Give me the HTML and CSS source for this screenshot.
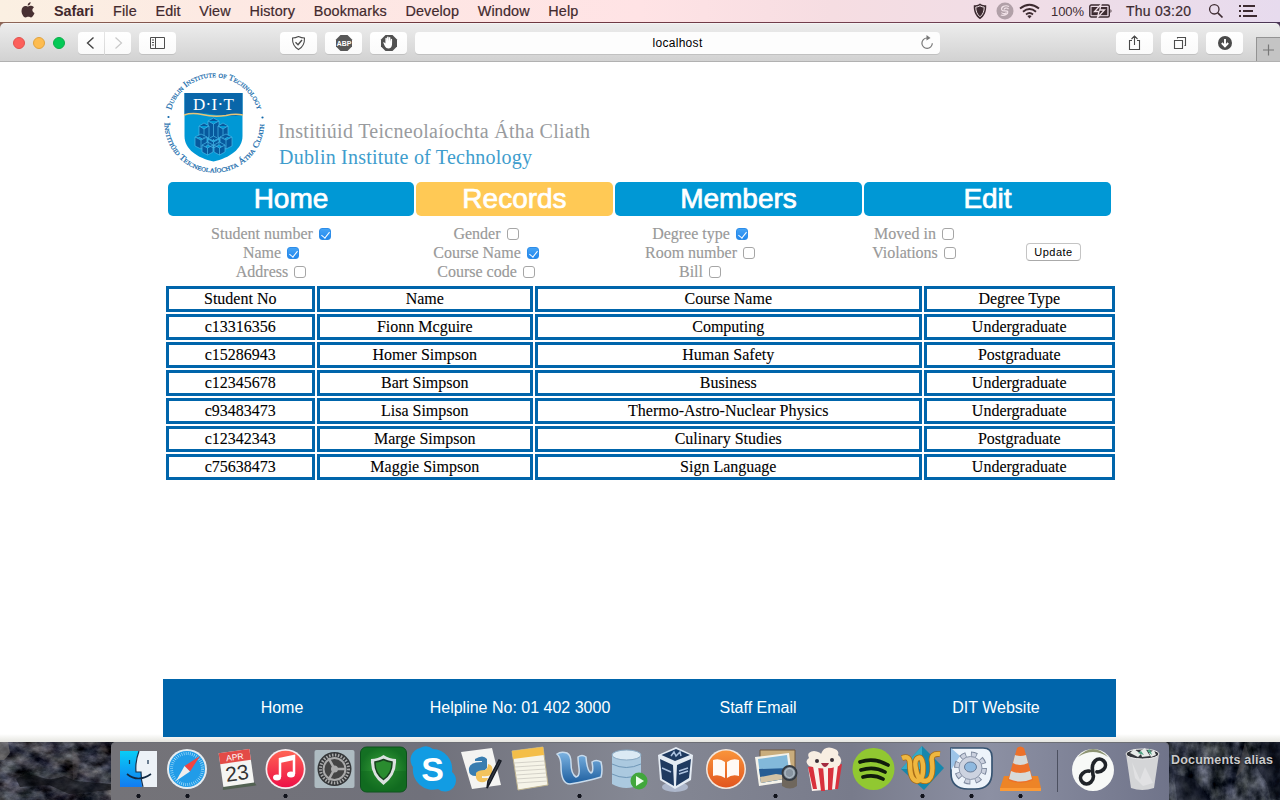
FILE: index.html
```html
<!DOCTYPE html>
<html lang="en">
<head>
<meta charset="utf-8">
<title>localhost</title>
<link rel="stylesheet" href="styles.css">
</head>
<body>
<div class="desktop">
  <div class="menubar">
    <svg class="apple" width="14" height="16" viewBox="0 0 14 16"><path d="M9.6 0C9.8 1.9 8.2 3.7 6.7 3.6 6.5 1.900 8 .3 9.600 0zM7.100 4.500C7.800 4.500 8.800 3.700 10.200 3.800c1.200.1 2.200.6 2.800 1.500-2.400 1.500-2 4.700.5 5.700-.6 1.800-2 4.400-3.500 4.400-1 0-1.500-.6-2.700-.6s-1.700.6-2.700.6C2.600 15.400.5 11.800.5 8.900c0-3.200 2-5 4-5 1.100 0 2 .6 2.600.6z" fill="#483032"/></svg>
    <nav class="menus"><b>Safari</b><span>File</span><span>Edit</span><span>View</span><span>History</span><span>Bookmarks</span><span>Develop</span><span>Window</span><span>Help</span></nav>
    <div class="status">
      <svg width="14" height="17" viewBox="0 0 14 17"><path d="M7 .5c2 1.500 4 1.700 6.200 1.700.4 6-1.700 11-6.200 14C2.500 13.200.4 8.200.8 2.200 3 2.200 5 2 7 .5z" fill="#3d2b31"/><path d="M7 2.800c1.500.9 2.800 1.200 4.200 1.300.1 4-1.200 7.300-4.200 9.700C4 11.400 2.700 8.100 2.800 4.100 4.200 4 5.500 3.700 7 2.800z" fill="none" stroke="#eadce0" stroke-width="1"/></svg>
      <svg class="swirl" width="18" height="18" viewBox="0 0 18 18"><circle cx="9" cy="9" r="8.500" fill="#b1a0a8"/><path d="M13 4.500C9 2.500 4.500 5 5.800 8c1.200 2 5.300-.2 6 1.800.5 2-3.500 4.500-7 3.200M12.500 7.200C11 5 7.700 6.300 8.300 7.700M5.500 10.500c1.500 2 5 1.200 4.500-.3" fill="none" stroke="#f1e2e8" stroke-width="1.200"/></svg>
      <svg class="wifi" width="21" height="16" viewBox="0 0 21 16"><g fill="none" stroke="#3d2b31" stroke-width="1.900"><path d="M1 5.500Q10.500-2 20 5.500M4 8.700Q10.500 3.300 17 8.700M7 11.500Q10.500 8.700 14 11.500"/></g><path d="M8.300 12.900q2.200-1.500 4.400 0l-2.200 2.700z" fill="#3d2b31"/></svg>
      <span class="percent">100%</span>
      <svg class="battery" width="24" height="14" viewBox="0 0 24 14"><rect x=".8" y="1" width="19.500" height="12" rx="1.500" fill="none" stroke="#3d2b31" stroke-width="1.400"/><path d="M2.500 3h15.800v8.200H2.500z" fill="#3d2b31"/><path d="M12 .5L5.500 7.500H10L8.500 13.500 15.500 6h-4.700z" fill="#3d2b31" stroke="#f0dfe7" stroke-width="1.300"/><path d="M21.500 5v4q2-2 0-4z" fill="#3d2b31"/></svg>
      <span class="clock">Thu 03:20</span>
      <svg class="search" width="16" height="16" viewBox="0 0 16 16"><circle cx="6.300" cy="6.300" r="4.700" fill="none" stroke="#3d2b31" stroke-width="1.300"/><path d="M9.800 9.800l4.700 4.700" stroke="#3d2b31" stroke-width="1.700"/></svg>
      <svg class="list" width="19" height="12" viewBox="0 0 19 12"><path d="M0 1h2M4 1h12M0 6h2M4 6h10M0 11h2M4 11h14" stroke="#3d2b31" stroke-width="2"/></svg>
    </div>
  </div>

  <div class="window">
    <div class="toolbar">
      <div class="lights"><i class="red"></i><i class="amber"></i><i class="green"></i></div>
      <div class="button half"><svg width="26" height="22"><path d="M15.500 5.500L9.500 11l6 5.500" fill="none" stroke="#454545" stroke-width="1.400"/></svg></div>
      <div class="button half forward"><svg width="26" height="22"><path d="M10.500 5.500l6 5.500-6 5.500" fill="none" stroke="#c9c9c9" stroke-width="1.200"/></svg></div>
      <div class="button sidebar"><svg width="37" height="22"><path d="M11.500 5.500h14v11h-14zM16.500 5.500v11M13 8h2M13 10.500h2M13 13h2" fill="none" stroke="#4d4d4d"/></svg></div>
      <div class="button shield"><svg width="37" height="22"><path d="M18.500 4.500q3 1.500 6 1.500 .3 8-6 11.500-6.300-3.500-6-11.500 3 0 6-1.500z" fill="none" stroke="#4d4d4d" stroke-width="1.100"/><path d="M15.500 10.300l2.500 2.400 4-4.700" fill="none" stroke="#4d4d4d" stroke-width="1.400"/></svg></div>
      <div class="button"><svg width="37" height="22"><path d="M15.500 3h7l4.500 4.500v7L22.500 19h-7L11 14.500v-7z" fill="#575757"/><text x="19" y="13.600" text-anchor="middle" textLength="14.500" lengthAdjust="spacingAndGlyphs" font-size="7.500" font-weight="bold" fill="#fff">ABP</text></svg></div>
      <div class="button"><svg width="37" height="22"><path d="M15.500 3h7l4.500 4.500v7L22.500 19h-7L11 14.500v-7z" fill="#515151"/><path d="M13.200 10.500c1-.8 1.500.3 2.200 1V6.500c0-1 1.400-1 1.500 0V9.500l.2-4.300c0-1.100 1.500-1.100 1.600 0v4.100l.3-3.500c.1-1 1.400-.9 1.400 0v3.900l.4-2.400c.2-.9 1.300-.7 1.300.2 0 5.500.2 9-3.600 9-3.300 0-4-3.500-5.300-6z" fill="#fff"/></svg></div>
      <div class="address"><span>localhost</span><svg class="reload" width="14" height="15" viewBox="0 0 14 15"><path d="M7 3a5.200 5.200 0 1 0 5.300 5.200" fill="none" stroke="#777" stroke-width="1.200"/><path d="M6.500 0v5.500L10.500 3z" fill="#777"/></svg></div>
      <div class="button share"><svg width="37" height="22"><path d="M16 8.500h-2.500v9h10v-9H21M18.500 13V4M15.500 7l3-3 3 3" fill="none" stroke="#484848" stroke-width="1.100"/></svg></div>
      <div class="button"><svg width="37" height="22"><path d="M13.500 8.500h8v8h-8zM16.500 6.500v-1h8v8h-1" fill="none" stroke="#4d4d4d" stroke-width="1.100"/></svg></div>
      <div class="button"><svg width="37" height="22"><circle cx="19" cy="11" r="7" fill="#4b4b4b"/><path d="M19 7v7M15.800 11l3.200 3.300 3.200-3.300" fill="none" stroke="#fff" stroke-width="1.900"/></svg></div>
      <div class="newtab"><svg width="23" height="23"><path d="M6 12h11M11.500 6.500v11" stroke="#777" stroke-width="1.200"/></svg></div>
    </div>

    <main class="page">
      <header class="brand">
        <svg width="440" height="120" viewBox="163 62 440 120">
          <defs>
            <path id="ring-top" d="M171 110.200A45 45 0 0 1 257.600 110.200"/>
            <path id="ring-bottom" d="M164.550 120.500A49.800 49.800 0 1 0 264.050 120.500"/>
          </defs>
          <g class="ring-text" fill="#1268aa" stroke="#1268aa" stroke-width=".2">
            <text><textPath href="#ring-top" startOffset="0" textLength="116" lengthAdjust="spacingAndGlyphs">Dublin Institute of Technology</textPath></text>
            <text><textPath href="#ring-bottom" startOffset="2" textLength="155" lengthAdjust="spacingAndGlyphs">Institiúid Teicneolaíochta Átha Cliath</textPath></text>
          </g>
          <circle cx="168.500" cy="117" r="1.100" fill="#1268aa"/><circle cx="262.500" cy="117.500" r="1.100" fill="#1268aa"/>
          <path d="M184.500 93h58v43c0 13-13 22-29 25.500C197 158 184.500 149 184.500 136z" fill="#0098d5"/>
          <path d="M184.500 93h58v22q-15 2-29-.5t-29 0z" fill="#0966a9"/>
          <path d="M184 115q8-2.500 18-.5 12 3 24 1 9-2 17-.5" fill="none" stroke="#e6c477" stroke-width="1.500"/>
          <text x="213.500" y="110" text-anchor="middle" font-size="17" textLength="41" fill="#fff">D·I·T</text>
          <g fill="#07599d" stroke="#48b9e9" stroke-width=".7">
            <path d="M208 121l5.500-3 5.500 3v17l-5.500 3-5.500-3zM208 121l5.500 3 5.500-3M213.500 124v17"/>
            <path d="M199 126l5-3 5 3v11l-5 3-5-3zM199 126l5 3 5-3M204 129v11M218 126l5-3 5 3v11l-5 3-5-3zM218 126l5 3 5-3M223 129v11"/>
            <path d="M195 137l6-3 6 3v9l-6 3-6-3zM195 137l6 3 6-3M201 140v9M220 137l6-3 6 3v9l-6 3-6-3zM220 137l6 3 6-3M226 140v9"/>
            <path d="M202 145l5.500-3 5.500 3v7l-5.500 3-5.500-3zM202 145l5.500 3 5.500-3M207.500 148v7M214 145l5.500-3 5.500 3v7l-5.500 3-5.500-3zM214 145l5.500 3 5.500-3M219.500 148v7M208 139l5.500-3 5.500 3v6l-5.500 3-5.500-3zM208 139l5.500 3 5.500-3M213.500 142v6"/>
          </g>
          <text x="278" y="138" font-size="20" textLength="312" fill="#999b9e">Institiúid Teicneolaíochta Átha Cliath</text>
          <text x="279" y="164" font-size="20" textLength="253" fill="#3e9dcd">Dublin Institute of Technology</text>
        </svg>
      </header>
      <nav class="tabs"><a>Home</a><a class="current">Records</a><a>Members</a><a>Edit</a></nav>
      <form class="filters">
        <div><label>Student number<i class="box on"></i></label><label>Name<i class="box on"></i></label><label>Address<i class="box"></i></label></div>
        <div><label>Gender<i class="box"></i></label><label>Course Name<i class="box on"></i></label><label>Course code<i class="box"></i></label></div>
        <div><label>Degree type<i class="box on"></i></label><label>Room number<i class="box"></i></label><label>Bill<i class="box"></i></label></div>
        <div class="raised"><label>Moved in<i class="box"></i></label><label>Violations<i class="box"></i></label></div>
        <button type="button">Update</button>
      </form>
      <section class="records">
        <span>Student No</span><span>Name</span><span>Course Name</span><span>Degree Type</span>
        <span>c13316356</span><span>Fionn Mcguire</span><span>Computing</span><span>Undergraduate</span>
        <span>c15286943</span><span>Homer Simpson</span><span>Human Safety</span><span>Postgraduate</span>
        <span>c12345678</span><span>Bart Simpson</span><span>Business</span><span>Undergraduate</span>
        <span>c93483473</span><span>Lisa Simpson</span><span>Thermo-Astro-Nuclear Physics</span><span>Undergraduate</span>
        <span>c12342343</span><span>Marge Simpson</span><span>Culinary Studies</span><span>Postgraduate</span>
        <span>c75638473</span><span>Maggie Simpson</span><span>Sign Language</span><span>Undergraduate</span>
      </section>
      <footer class="footer"><a>Home</a><a>Helpline No: 01 402 3000</a><a>Staff Email</a><a>DIT Website</a></footer>
    </main>
  </div>

  <div class="bottom">
    <svg class="rock" viewBox="0 0 111 58">
      <filter id="stone" x="0" y="0" width="100%" height="100%" color-interpolation-filters="sRGB"><feTurbulence type="fractalNoise" baseFrequency=".05 .08" numOctaves="5" seed="7"/><feColorMatrix values=".85 .1 0 0 -.27  .85 .03 0 0 -.23  .85 0 .1 0 -.23  0 0 0 0 1"/></filter>
      <rect width="111" height="58" filter="url(#stone)"/><path d="M0 0h8l2 11-6 7H0z" fill="#8b8782" opacity=".5"/><path d="M16 37q12-7 24-2t24-1l12 5 35 3v6l-42 4-20-9-29 2z" fill="#090a0d" opacity=".6"/><path d="M72 6l8 12-3 17-4 3z" fill="#6a6567" opacity=".25"/>
    </svg>
    <div class="dock">
      <svg class="icon running" viewBox="0 0 49 58"><defs><linearGradient id="sky" x2="0" y2="1"><stop stop-color="#09cdf5"/><stop offset="1" stop-color="#117bf1"/></linearGradient></defs><path d="M6 9h37v36H6z" fill="#edf2f7"/><path d="M6 9h19q-4 10-3 21h5l1 15H6z" fill="url(#sky)"/><path d="M25 9q-4 11-3 21h5q0 8 2 15M15.500 18v4M34 18v4" fill="none" stroke="#17314d" stroke-width="1.200"/><path d="M13 32q11 9 24 0" fill="none" stroke="#132941" stroke-width="1.700"/></svg>
      <svg class="icon running" viewBox="0 0 49 58"><circle cx="24" cy="27" r="20" fill="#e7edf1"/><circle cx="24" cy="27" r="18" fill="#219ce8"/><circle cx="24" cy="27" r="15.500" fill="none" stroke="#b8e6fb" stroke-width="3" stroke-dasharray=".6 1.500"/><path d="M37 14L27 29.500 21.500 24z" fill="#f14442"/><path d="M13 39l8.500-15 5.500 5.500z" fill="#eee"/></svg>
      <svg class="icon" viewBox="0 0 49 58"><g transform="rotate(-8 24 27)"><path d="M9 42h31l2 4H8z" fill="#526152"/><path d="M9 9h31v34H9z" fill="#f5f5f3"/><path d="M9 9h31v11H9z" fill="#e34b46"/><text x="24.500" y="18" text-anchor="middle" font-size="8.500" fill="#fff">APR</text><text x="24.500" y="38.500" text-anchor="middle" font-size="21" fill="#333">23</text></g></svg>
      <svg class="icon running" viewBox="0 0 49 58"><defs><linearGradient id="tune" x2="0" y2="1"><stop stop-color="#ff6454"/><stop offset="1" stop-color="#ed1047"/></linearGradient></defs><circle cx="24.500" cy="27" r="20" fill="#f5edf0"/><circle cx="24.500" cy="27" r="18.300" fill="url(#tune)"/><path d="M19 35V17l14-3v18" fill="none" stroke="#fff" stroke-width="2.500"/><path d="M19 17l14-3v4l-14 3z" fill="#fff"/><ellipse cx="16" cy="35.500" rx="4" ry="3" fill="#fff"/><ellipse cx="30" cy="32.500" rx="4" ry="3" fill="#fff"/></svg>
      <svg class="icon" viewBox="0 0 49 58"><rect x="4.500" y="8" width="40" height="38" rx="2" fill="#aebbc1"/><circle cx="24.500" cy="27" r="17" fill="#343638"/><circle cx="24.500" cy="27" r="14" fill="none" stroke="#aaa" stroke-width="3" stroke-dasharray="1.500 1.500"/><circle cx="24.500" cy="27" r="11" fill="#444" stroke="#aaa" stroke-width="2"/><path d="M24.500 27H36M24.500 27l-6-11M24.500 27l-6 11" stroke="#aaa" stroke-width="2.500"/><circle cx="24.500" cy="27" r="3.500" fill="#aaa"/></svg>
      <svg class="icon" viewBox="0 0 49 58"><defs><radialGradient id="leaf"><stop stop-color="#3da63c"/><stop offset="1" stop-color="#147023"/></radialGradient></defs><rect x="1.500" y="5" width="46" height="45" rx="6" fill="url(#leaf)" stroke="#0c511c"/><path d="M2 29h45v15q0 5-6 5H8q-6 0-6-5z" fill="#0d641b" opacity=".4"/><path d="M24.500 13q6 4 12.500 4 1 16-12.500 26Q11 33 12 17q7 0 12.500-4z" fill="#dce1e0"/><path d="M24.500 17.500q4 2 8.500 2.500 .5 11-8.500 17.500Q15.500 31 16 20q4.500-.5 8.500-2.500z" fill="#2a8c2f" stroke="#16401c" stroke-width="1.500"/></svg>
      <svg class="icon" viewBox="0 0 49 58"><path d="M12 6a12 12 0 0 1 13 1 20 20 0 0 1 19 23 11 11 0 0 1-14 17A20 20 0 0 1 5 25 12 12 0 0 1 12 6z" fill="#129ce3"/><text x="24.500" y="38.500" font-size="34" font-weight="bold" text-anchor="middle" fill="#fff">S</text></svg>
      <svg class="icon" viewBox="0 0 49 58"><path d="M4 10l31-4 9 37-29 4z" fill="#f4f4f2"/><path d="M18 17q8-5 12 0v9q-3 4-10 4l-1 4q-8 0-7-8 1-6 13-6v-1h-7z" fill="#397db0"/><path d="M31 22q6 1 4 9-2 4-10 3v2h6q-1 5-8 4-5-1-4-9 2-3 9-3 3-1 3-6z" fill="#f2c35d"/><path d="M44 19L33 41l-3 5 1-7 11-21z" fill="#343b46" stroke="#171b24" stroke-width="1.500"/></svg>
      <svg class="icon" viewBox="0 0 49 58"><path d="M6 9l31-4 5 38-30 5z" fill="#f6f4e8" stroke="#beb390"/><path d="M6 9l31-4 1 8-31 4z" fill="#f4be48"/><path d="M8 21l31-2M9 25l30-2M9 29l31-2M10 33l30-2M10 37l31-2M11 41l30-2" stroke="#cbc9c0" stroke-width=".8"/></svg>
      <svg class="icon running" viewBox="0 0 49 58"><defs><linearGradient id="ink" x2="0" y2="1"><stop stop-color="#7db4e2"/><stop offset="1" stop-color="#1c5d9e"/></linearGradient></defs><path d="M2 12q4-3 10-1 4 2 4 10 0 11 5 14 4-1 3-9-1-8-1-11 4-3 8 0 1 14 5 16 3-1 1-11 4-3 9 0 2 8 0 15-13 4-31 7Q6 42 6 24 6 16 2 12z" fill="url(#ink)" stroke="#c8dbec" stroke-width="1.500"/></svg>
      <svg class="icon" viewBox="0 0 49 58"><path d="M8 12v30q14 8 29 0V12z" fill="#abc9df"/><ellipse cx="22.500" cy="13" rx="14.500" ry="5" fill="#dbeaf4" stroke="#88a8c2"/><path d="M8 22q14 7 29 0M8 32q14 7 29 0" fill="none" stroke="#6f97b7"/><circle cx="35" cy="39" r="8.500" fill="#41a73c"/><path d="M32 34v10l8-5z" fill="#eaffea"/></svg>
      <svg class="icon" viewBox="0 0 49 58"><ellipse cx="22" cy="45" rx="13" ry="5" fill="#adb7cb"/><path d="M5 13L23 5l17 8-2 25-16 9-15-9z" fill="#e4ebf3"/><path d="M8.500 13L23 7l14 6-15 6zM7 17l13 6 1 21-12-7zM38 17l-14 6-1 21 13-8z" fill="#1f3a60"/><path d="M18 14l3-4 2 4 4-4 1 4M9 26l9 4M26 29l9-3M26 32l9-3" fill="none" stroke="#adc2df" stroke-width="1.500"/></svg>
      <svg class="icon" viewBox="0 0 49 58"><defs><linearGradient id="cover" x2="0" y2="1"><stop stop-color="#f9943a"/><stop offset="1" stop-color="#e2561f"/></linearGradient></defs><circle cx="24" cy="27" r="20" fill="#f3e8df"/><circle cx="24" cy="27" r="18.500" fill="url(#cover)"/><path d="M11 18q7-2 12 2v16q-6-4-12-2zM25 20q5-4 12-2v16q-7-2-12 2z" fill="#fffaf5"/></svg>
      <svg class="icon running" viewBox="0 0 49 58"><path d="M9 8h35v27H9z" fill="#c9ad7d" stroke="#6f563c"/><path d="M4 15l34-4 4 28-34 5z" fill="#f4f2ea"/><path d="M7 17l29-4 3 23-29 5z" fill="#83b9da"/><path d="M8 27l30-1 1 10-29 5z" fill="#275d94"/><path d="M9 35l16-3 14 2v2l-29 5z" fill="#d2c2a5"/><path d="M31 33h15v11q-7 5-15 0z" fill="#6f675d"/><circle cx="38.500" cy="31" r="7" fill="#8794a0" stroke="#343b43" stroke-width="2"/><circle cx="38.500" cy="31" r="4.500" fill="none" stroke="#b9c6cf"/></svg>
      <svg class="icon" viewBox="0 0 49 58"><path d="M8 25l33-2-4 24-25 2z" fill="#faf1ec"/><path d="M8 25l5 22h4l-4-23zM18 24l3 25h4l-2-25zM28 24v24h4l2-25zM38 23l-3 24h3l4-25z" fill="#d8313d"/><path d="M9 24q-5-5 0-8-3-6 5-7 6 1 7 3 3-8 11-6 8 2 6 7 6 4 1 11-15 5-30 0z" fill="#f8eee2"/><circle cx="17" cy="19" r="2" fill="#392d34"/><circle cx="32" cy="18" r="2" fill="#392d34"/><path d="M21 21h8q-4 8-8 0z" fill="#a32b40"/></svg>
      <svg class="icon" viewBox="0 0 49 58"><circle cx="24.500" cy="27" r="21" fill="#91c831"/><path d="M11 20q14-5 28 3M12 28q13-4 24 2M14 35q11-3 20 2" fill="none" stroke="#101b0b" stroke-width="3.700" stroke-linecap="round"/></svg>
      <svg class="icon running" viewBox="0 0 49 58"><path d="M24 4l22 22-20 22L3 27z" fill="#1687ac"/><path d="M24 4v23H3z" fill="#35a9c6"/><path d="M4 16q8-3 8 6 0 16 7 17 7-1 6-16-1-9-5-7-4 2-2 11 2 13 10 12 8-2 6-19-2-9 8-8" fill="none" stroke="#a86d18" stroke-width="6"/><path d="M4 16q8-3 8 6 0 16 7 17 7-1 6-16-1-9-5-7-4 2-2 11 2 13 10 12 8-2 6-19-2-9 8-8" fill="none" stroke="#efb73f" stroke-width="4.400"/></svg>
      <svg class="icon running" viewBox="0 0 49 58"><path d="M4 6h32q9 0 9 9v15q0 17-17 17h-7Q4 47 4 31z" fill="#edf3fa" stroke="#375472" stroke-width="1.700"/><path d="M4 6l9 8-9 14z" fill="#9cc4e8"/><circle cx="23.500" cy="26" r="14" fill="none" stroke="#7b879c" stroke-width="5" stroke-dasharray="6 5"/><circle cx="23.500" cy="26" r="13.500" fill="none" stroke="#cbd1df" stroke-width="4" stroke-dasharray="4.300 6.300" stroke-dashoffset="-.8"/><circle cx="23.500" cy="26" r="11.500" fill="#cdd3e0" stroke="#8c96aa" stroke-width="1"/><ellipse cx="23.500" cy="25" rx="6" ry="5" fill="#8fb9df" stroke="#667b98"/></svg>
      <svg class="icon running" viewBox="0 0 49 58"><path d="M8 34h34l3 12H4z" fill="#ed8427"/><path d="M4 46h41v3H4z" fill="#fb9a37"/><path d="M21 6q3-3 7 0l9 32q-12 6-25 0z" fill="#ed7129"/><path d="M19 13q5 2 11 0l2 8q-8 4-15 0zM15 29q9 4 19 0l2 8q-12 5-23 0z" fill="#d7dad8"/></svg>
      <i class="separator"></i>
      <svg class="icon" viewBox="0 0 49 58"><circle cx="24" cy="28" r="21" fill="#f7f9f7"/><path d="M9 15q15-16 30 0-15-10-30 0z" fill="#8d9473"/><path transform="translate(24 29.500) rotate(-45)" d="M-2.500 2.500L2-3C4-5 6-6 9-6c8 0 8 12 0 12C6 6 4 5 2.500 3M-2.500-3C-4-5-6-6-9-6c-8 0-8 12 0 12 3 0 5-1 6.500-3" fill="none" stroke="#202429" stroke-width="3.600" stroke-linecap="round"/></svg>
      <svg class="icon" viewBox="0 0 49 58"><path d="M8 12l5 34q11 4 23 0l5-34z" fill="#d4d5d7"/><ellipse cx="24.500" cy="12" rx="16.500" ry="5" fill="#34363b" stroke="#eee"/><path d="M12 11l4-4 7 5-3 3zM22 9l5-3 5 8-8 1zM31 11l5-3 2 5-5 2z" fill="#e7ebe8"/><path d="M20 11l3-2 3 4zM29 9l3-2 2 6z" fill="#4fa584"/><path d="M14 20l8 18 5-13 8 16-10 3-8-8z" fill="#fff" opacity=".3"/></svg>
    </div>
    <div class="rock right"><svg class="rock" viewBox="0 0 111 58"><filter id="cliff" x="0" y="0" width="100%" height="100%" color-interpolation-filters="sRGB"><feTurbulence type="fractalNoise" baseFrequency=".07 .055" numOctaves="5" seed="13"/><feColorMatrix values=".8 0 0 0 -.22  .8 0 0 0 -.2  .8 0 .1 0 -.21  0 0 0 0 1"/></filter><rect width="111" height="58" filter="url(#cliff)"/><path d="M76 0l5 17-8 12-6 6 5-19z" fill="#655e61" opacity=".4"/><path d="M5 32l21 5 15 21H8zM93 0l-5 26 10 15 4 17 9-3V0z" fill="#101421" opacity=".5"/></svg><span>Documents alias</span></div>
  </div>
</div>
</body>
</html>
```
FILE: styles.css
```css
* { box-sizing: border-box; }
body { margin: 0; font-family: "Liberation Sans", Arial, sans-serif; }
svg { display: block; flex: none; }
.desktop { width: 1280px; height: 800px; overflow: hidden; display: flex; flex-direction: column; background: linear-gradient(90deg, #8d6657, #6d353c 35%, #724050 70%, #4b3756); }
.menubar { height: 22px; flex: none; display: flex; align-items: center; background: linear-gradient(90deg, #fbf0e2, #fde9e3 18%, #ffe3e5 50%, #f6dde2 65%, #eedde8 85%, #e7dbee); color: #42292d; font-size: 14px; }
.apple { margin-left: 21px; margin-top: -3px; }
.menus { display: flex; gap: 18.6px; margin-left: 19px; font-size: 14.4px; letter-spacing: .13px; line-height: 22px; -webkit-text-stroke: .2px; }
.menus b { letter-spacing: -.05px; width: 40.5px; -webkit-text-stroke: 0; }
.status { margin-left: auto; margin-right: 22px; display: flex; align-items: center; color: #3d2b31; }
.swirl { margin-left: 9px; margin-top: -1px; }
.wifi { margin-left: 5px; }
.percent { font-size: 13px; margin-left: 11px; width: 33px; letter-spacing: -.1px; }
.battery { margin-left: 5px; }
.clock { margin-left: 13px; width: 66px; letter-spacing: .25px; -webkit-text-stroke: .2px; white-space: nowrap; }
.search { margin-left: 16px; }
.list { margin-left: 15px; }

.window { height: 719px; flex: none; margin-top: 1px; border-radius: 5px 5px 0 0; overflow: hidden; display: flex; flex-direction: column; }
.toolbar { height: 39px; flex: none; display: flex; align-items: center; background: linear-gradient(#ececec, #d2d2d2); border-bottom: 1px solid #b1b1b1; border-top: 1px solid #f4f4f4; }
.lights { display: flex; gap: 8px; margin: 0 13px 0 13px; }
.lights i { width: 12px; height: 12px; border-radius: 50%; }
.red { background: #fc605b; border: 1px solid #e2524e; }
.amber { background: #fdbc50; border: 1px solid #e1a33e; }
.green { background: #04c956; border: 1px solid #0cae48; }
.button { width: 37px; height: 22px; background: linear-gradient(#fff, #fafafa); border-radius: 4px; margin-left: 8px; box-shadow: 0 1px 0 #c1c1c1; flex: none; }
.half { width: 26px; margin-left: 0; border-radius: 4px 0 0 4px; }
.forward { margin-left: 1px; border-radius: 0 4px 4px 0; }
.shield { margin-left: 104px; }
.address { width: 525px; height: 22px; margin-left: 8px; border-radius: 4px; background: #fdfdfd; box-shadow: 0 1px 0 #c1c1c1; display: grid; grid-template-columns: 24px 1fr 24px; align-items: center; text-align: center; font-size: 12px; letter-spacing: .3px; line-height: 22px; }
.address span { grid-column: 2; }
.reload { margin-left: 4px; }
.share { margin-left: 176px; }
.newtab { width: 24px; height: 24px; margin-left: auto; align-self: flex-end; background: #c4c4c4; border: 1px solid #939393; border-width: 1px 0 0 1px; }

.page { flex: 1; background: linear-gradient(#fff 672px, #f2f2ef 676px, #e5e5e0 680px); padding: 0 164px 5px 163px; display: flex; flex-direction: column; font-family: "Liberation Serif", "Times New Roman", serif; }
.brand { height: 120px; flex: none; }
.tabs { display: grid; grid-template-columns: 246px 197px 247px 247px; gap: 2px; margin-left: 5px; height: 34px; flex: none; }
.tabs a { background: #0098d5; border-radius: 5px; color: #fff; font: 28px/33px "Liberation Sans", Arial, sans-serif; -webkit-text-stroke: .7px; text-align: center; }
.tabs .current { background: #ffc955; }
.filters { display: grid; grid-template-columns: 216px 214px 214px 214px 65px; height: 62px; margin: 8px 0 0; flex: none; color: #999; font-size: 16px; }
.filters label { display: flex; justify-content: center; align-items: center; gap: 6px; height: 19px; line-height: 19px; -webkit-text-stroke: .15px; }
.box { width: 12px; height: 12px; border: 1px solid #a6a6a6; border-radius: 3px; background: #fff; margin-top: 1px; position: relative; }
.box.on { background: linear-gradient(#45a3f5, #2188ee); border-color: #2d8de9; }
.box.on::after { content: ""; position: absolute; left: 3px; top: 1px; width: 4px; height: 7px; border: solid #fff; border-width: 0 1.6px 1.6px 0; transform: rotate(38deg); }
.raised label { line-height: 17px; }
.filters button { width: 55px; height: 18px; margin: 19px 5px 0; padding: 0; border: 1px solid #c4c4c4; border-bottom-color: #aaa; border-radius: 4px; background: #fff; color: #000; font: 11px/15px "Liberation Sans", Arial, sans-serif; letter-spacing: .5px; }
.records { display: grid; grid-template-columns: 149px 216px 387px 191px; grid-auto-rows: 26px; gap: 2px; margin-left: 3px; flex: none; }
.records span { border: 3px solid #0065ab; background: #fff; font-size: 16px; line-height: 20px; text-align: center; color: #000; padding-right: .5px; -webkit-text-stroke: .1px; }
.footer { height: 58px; margin-top: auto; background: #0065ab; color: #fff; display: grid; grid-template-columns: repeat(4, 1fr); text-align: center; font: 16px/57px "Liberation Sans", Arial, sans-serif; padding-right: 1px; }

.brand svg { font-family: "Liberation Serif", serif; }
.ring-text { font-size: 8.400px; font-variant: small-caps; }
.bottom { height: 58px; flex: none; display: flex; background: #20222a; }
.rock { width: 111px; height: 58px; overflow: hidden; flex: none; display: block; }
.right { position: relative; }
.right span { position: absolute; left: 2px; top: 9px; color: #c9c9cb; font: bold 12.5px/18px "Liberation Sans", Arial, sans-serif; white-space: nowrap; letter-spacing: .18px; text-shadow: 0 1px 2px #000; }
.dock { width: 1058px; height: 58px; flex: none; display: flex; padding-left: 2.5px; background: linear-gradient(90deg, #747378, #70717b 30%, #858894 50%, #787b8b 70%, #8c90a3 83%, #70748a); border-radius: 5px 5px 0 0; box-shadow: inset 0 1px 0 #6d6f76; }
.icon { width: 49px; height: 58px; position: relative; }
.running { background: radial-gradient(circle at 24.5px 54px, #11131c 1.8px, transparent 2.4px); }
.separator { width: 1px; height: 42px; margin: 8px 11px 0 12px; background: #4c5060; }
```
